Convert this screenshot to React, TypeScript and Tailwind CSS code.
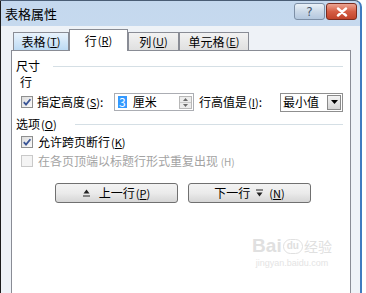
const M = ({ c }: { c: string }) => (
  <span className="ml-[1px] text-[11px]">
    (<span className="underline">{c}</span>)
  </span>
);

function CheckBox({ checked, disabled }: { checked?: boolean; disabled?: boolean }) {
  return (
    <div
      className={`w-[12px] h-[12px] flex items-center justify-center border ${
        disabled
          ? "border-[#c9c9c9] bg-[#f4f4f4]"
          : "border-[#8e8f8f] bg-gradient-to-br from-[#dcdcdc] to-[#fbfbfb]"
      }`}
    >
      {checked && (
        <svg width="10" height="10" viewBox="0 0 10 10">
          <path d="M1.8 5.2 L4 7.6 L8.4 2.2" fill="none" stroke="#3a5596" strokeWidth="1.8" />
        </svg>
      )}
    </div>
  );
}

function Tab({ label, m, w, active, hover }: { label: string; m: string; w: string; active?: boolean; hover?: boolean }) {
  if (active) {
    return (
      <div
        className={`${w} h-[22px] -mb-[1px] z-10 flex items-center justify-center bg-white border border-b-0 border-[#898c95] text-[12px]`}
      >
        {label}
        <M c={m} />
      </div>
    );
  }
  return (
    <div
      className={`${w} h-[18px] flex items-center justify-center border border-b-0 border-[#898c95] text-[12px] ${
        hover ? "bg-gradient-to-b from-[#e9f3fc] to-[#bcdaf4]" : "bg-gradient-to-b from-[#f2f2f2] to-[#e0e0e0]"
      }`}
    >
      {label}
      <M c={m} />
    </div>
  );
}

function Section({ title, lineLeft }: { title: React.ReactNode; lineLeft: string }) {
  return (
    <div className="h-[16px] flex items-center pl-[4px] pr-[7px]">
      <span className="leading-[16px]">{title}</span>
      <div className={`flex-1 h-px bg-[#d5dfe5] ${lineLeft}`} />
    </div>
  );
}

export default function App() {
  return (
    <div className="w-[366px] h-[293px] overflow-hidden bg-white font-['Noto_Sans_CJK_SC','Noto_Sans',sans-serif] text-[12px] text-black">
      <div className="w-[362px] h-[300px] flex flex-col border-l border-t border-r-2 border-l-[#1c1c1c] border-t-[#4a5d75] border-r-[#3f7cc0] rounded-tr-[7px] overflow-hidden bg-gradient-to-b from-[#c4d8ee] to-[#d8e5f2]">
        {/* title bar */}
        <div className="h-[25px] flex items-center pl-[4px]">
          <span className="text-[13px] leading-[16px] mt-[1px]">表格属性</span>
          <div className="ml-auto mr-[3px] flex gap-[1px] self-start mt-[2px]">
            <div className="w-[31px] h-[17px] flex items-center justify-center rounded-[3px] border border-[#7d8fa6] bg-gradient-to-b from-[#eaf1f8] via-[#cbd9e8] to-[#b3c7de] text-[#44556b] text-[12px] leading-none font-['DejaVu_Sans',sans-serif]">
              ?
            </div>
            <div className="w-[31px] h-[17px] flex items-center justify-center rounded-[3px] border border-[#7a2c1f] bg-gradient-to-b from-[#eba493] via-[#d55e45] to-[#c1442a]">
              <svg width="12" height="10" viewBox="0 0 12 10">
                <path d="M2 1.5 L10 8.5 M10 1.5 L2 8.5" stroke="white" strokeWidth="2.4" strokeLinecap="round" />
              </svg>
            </div>
          </div>
        </div>

        {/* client area */}
        <div className="flex-1 flex flex-col bg-[#eef2f7] pl-[10px] pr-[9px]">
          <div className="h-[24px] flex items-end pl-[2px]">
            <Tab label="表格" m="T" w="w-[56px]" hover />
            <Tab label="行" m="R" w="w-[59px]" active />
            <Tab label="列" m="U" w="w-[51px]" />
            <Tab label="单元格" m="E" w="w-[70px]" />
          </div>

          <div className="flex-1 bg-white border border-[#898c95] flex flex-col pt-[7px]">
            <Section title="尺寸" lineLeft="ml-[13px]" />
            <div className="h-[15px] flex items-center pl-[8px] leading-[15px]">行</div>

            {/* height row */}
            <div className="mt-[2px] h-[22px] flex items-center pl-[9px] pr-[7px]">
              <CheckBox checked />
              <span className="ml-[4px] w-[72px] whitespace-nowrap">
                指定高度<M c="S" />:
              </span>
              <div className="ml-[5px] w-[80px] h-[18px] flex items-center border border-[#abadb3] bg-white">
                <span className="ml-[3px] px-[1px] bg-[#3399ff] text-white leading-[12px]">3</span>
                <span className="ml-[6px]">厘米</span>
                <div className="ml-auto mr-[1px] w-[13px] h-[13px] flex flex-col border border-[#b8b8b8] bg-[#ececec]">
                  <div className="flex-1 flex items-center justify-center border-b border-[#c8c8c8]">
                    <svg width="5" height="3" viewBox="0 0 5 3"><path d="M0 3 L2.5 0 L5 3 Z" fill="#6b6b6b" /></svg>
                  </div>
                  <div className="flex-1 flex items-center justify-center">
                    <svg width="5" height="3" viewBox="0 0 5 3"><path d="M0 0 L2.5 3 L5 0 Z" fill="#6b6b6b" /></svg>
                  </div>
                </div>
              </div>
              <span className="ml-[5px] w-[75px] whitespace-nowrap">
                行高值是<M c="I" />:
              </span>
              <div className="ml-auto w-[63px] h-[19px] flex items-center border border-[#8f8f8f] bg-white">
                <span className="ml-[2px]">最小值</span>
                <div className="ml-auto mr-[1px] w-[14px] h-[15px] flex items-center justify-center border border-[#8a8a8a] bg-gradient-to-b from-[#f4f4f4] to-[#d4d4d4]">
                  <svg width="7" height="4" viewBox="0 0 7 4"><path d="M0 0 L3.5 4 L7 0 Z" fill="#000" /></svg>
                </div>
              </div>
            </div>

            <div className="mt-[3px]">
              <Section title={<>选项<M c="O" /></>} lineLeft="ml-[18px]" />
            </div>

            <div className="mt-[1px] h-[18px] flex items-center pl-[9px]">
              <CheckBox checked />
              <span className="ml-[5px]">
                允许跨页断行<M c="K" />
              </span>
            </div>
            <div className="mt-[1px] h-[18px] flex items-center pl-[9px] text-[#a3a3a3]">
              <CheckBox disabled />
              <span className="ml-[5px]">
                在各页顶端以标题行形式重复出现 <span className="text-[10px]">(H)</span>
              </span>
            </div>

            {/* nav buttons */}
            <div className="mt-[13px] flex pl-[43px] gap-[10px]">
              <div className="w-[123px] h-[20px] flex items-center justify-center gap-[9px] rounded-[3px] border border-[#707070] bg-gradient-to-b from-[#f3f3f3] via-[#ebebeb] to-[#d6d6d6]">
                <svg width="7" height="8" viewBox="0 0 7 8">
                  <path d="M0.5 4.5 L3.5 0.5 L6.5 4.5 Z" fill="#222" />
                  <path d="M0 7 H7" stroke="#222" strokeWidth="1" />
                </svg>
                <span>
                  上一行<M c="P" />
                </span>
              </div>
              <div className="w-[123px] h-[20px] flex items-center justify-center rounded-[3px] border border-[#707070] bg-gradient-to-b from-[#f3f3f3] via-[#ebebeb] to-[#d6d6d6]">
                <span>下一行</span>
                <svg className="ml-[6px]" width="7" height="8" viewBox="0 0 7 8">
                  <path d="M0 1 H7" stroke="#222" strokeWidth="1" />
                  <path d="M0.5 3.5 L3.5 7.5 L6.5 3.5 Z" fill="#222" />
                </svg>
                <span className="ml-[5px]">
                  <M c="N" />
                </span>
              </div>
            </div>

            {/* watermark */}
            <div className="mt-[33px] flex justify-end pr-[12px]">
              <div className="flex flex-col items-center gap-[2px] w-[92px]">
                <div className="h-[20px] flex items-center text-[#e0e0e0] font-['Liberation_Sans',sans-serif]">
                  <span className="text-[19px] leading-[20px] font-bold">Bai</span>
                  <span className="mx-[1px] px-[3px] h-[15px] flex items-center rounded-full border border-[#e0e0e0] text-[10px] leading-[12px] font-bold">du</span>
                  <span className="text-[14px] leading-[18px] font-['Noto_Sans_CJK_SC',sans-serif]">经验</span>
                </div>
                <span className="text-[9px] leading-[10px] text-[#e4e4e4] font-['Liberation_Sans',sans-serif]">
                  jingyan.baidu.com
                </span>
              </div>
            </div>
          </div>
        </div>
      </div>
    </div>
  );
}
